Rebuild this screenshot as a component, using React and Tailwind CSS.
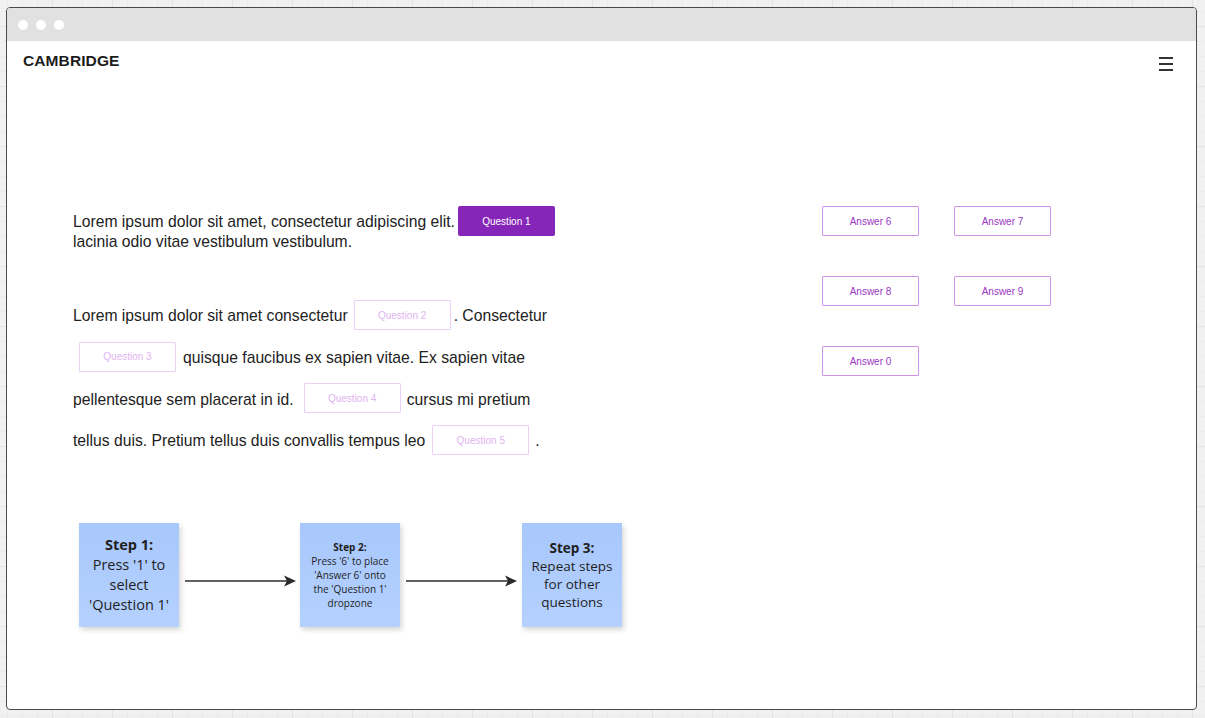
import { Fragment } from 'react'

// -- Small building blocks ---------------------------------------------

function DropZone({ label, filled = false, className = '' }) {
  if (filled) {
    return (
      <span className={`inline-flex items-center justify-center w-[97px] h-[30px] rounded-[2px] bg-[#8626b8] text-white text-[10px] shrink-0 ${className}`}>
        {label}
      </span>
    )
  }
  return (
    <span className={`inline-flex items-center justify-center w-[97px] h-[30px] rounded-[1px] bg-white border border-[#ebd0f6] text-[#dfb3f0] text-[10px] shrink-0 ${className}`}>
      {label}
    </span>
  )
}

function AnswerChip({ label }) {
  return (
    <div className="flex items-center justify-center w-[97px] h-[30px] rounded-[1px] border border-[#cf94e6] bg-white text-[#9a36c4] text-[10px]">
      {label}
    </div>
  )
}

function StepNote({ children, className = '' }) {
  return (
    <div
      className={`w-[100px] h-[104px] flex flex-col items-center justify-center text-center text-[#1f1f1f] bg-[linear-gradient(to_bottom,#a8c7fb,#b4d1ff)] shadow-[2px_3px_5px_rgba(0,0,0,0.16)] font-['Open_Sans',sans-serif] shrink-0 ${className}`}
    >
      {children}
    </div>
  )
}

function Arrow() {
  return (
    <svg width="121" height="16" viewBox="0 0 121 16" className="shrink-0 mt-[11px]">
      <line x1="6" y1="8" x2="108" y2="8" stroke="#2b2b2b" strokeWidth="1.6" />
      <path d="M105 2.5 L117 8 L105 13.5 L108 8 Z" fill="#2b2b2b" />
    </svg>
  )
}

// -- Page ----------------------------------------------------------------

const answers = ['Answer 6', 'Answer 7', 'Answer 8', 'Answer 9', 'Answer 0']

export default function App() {
  return (
    <div className="w-[1205px] h-[718px] overflow-hidden bg-[#f1f1f1] bg-[linear-gradient(to_right,#e3e3e3_1px,transparent_1px),linear-gradient(to_bottom,#e3e3e3_1px,transparent_1px),linear-gradient(to_right,#ebebeb_1px,transparent_1px),linear-gradient(to_bottom,#ebebeb_1px,transparent_1px)] [background-size:60px_60px,60px_60px,15px_15px,15px_15px] [background-position:52px_26px,52px_26px,52px_26px,52px_26px] pt-[7px] pl-[6px] font-['Liberation_Sans',Arial,sans-serif]">
      <div className="w-[1191px] h-[703px] rounded-[4px] border border-[#4a4a4a] bg-white overflow-hidden flex flex-col">
        {/* window chrome */}
        <div className="h-[33px] bg-[#e1e1e1] flex items-center gap-[8px] pl-[11px] shrink-0">
          <span className="w-[10px] h-[10px] rounded-full bg-white" />
          <span className="w-[10px] h-[10px] rounded-full bg-white" />
          <span className="w-[10px] h-[10px] rounded-full bg-white" />
        </div>

        {/* header */}
        <div className="h-[40px] flex items-center justify-between pl-[16px] pr-[23px] shrink-0">
          <span className="text-[15.5px] font-bold text-[#1c1c1c] tracking-[0.1px]">CAMBRIDGE</span>
          <div className="flex flex-col gap-[4px] mt-[6px]">
            <span className="block w-[14px] h-[2px] bg-[#333]" />
            <span className="block w-[14px] h-[2px] bg-[#333]" />
            <span className="block w-[14px] h-[2px] bg-[#333]" />
          </div>
        </div>

        {/* body */}
        <div className="flex pl-[66px] pt-[125px]">
          <div className="w-[749px] shrink-0 text-[15.7px] text-[#222]">
            <div className="flex items-center h-[30px]">
              <span className="mt-[2px]">Lorem ipsum dolor sit amet, consectetur adipiscing elit.</span>
              <DropZone label="Question 1" filled className="ml-[3px]" />
            </div>
            <div className="leading-[19px] -mt-[4px]">lacinia odio vitae vestibulum vestibulum.</div>

            <div className="mt-[49px] flex flex-col gap-[11.7px]">
              <div className="flex items-center h-[30px]">
                <span className="mt-[2px]">Lorem ipsum dolor sit amet consectetur</span>
                <DropZone label="Question 2" className="ml-[6px]" />
                <span className="ml-[3px] mt-[2px]">. Consectetur</span>
              </div>
              <div className="flex items-center h-[30px]">
                <DropZone label="Question 3" className="ml-[6px]" />
                <span className="ml-[7px] mt-[2px]">quisque faucibus ex sapien vitae. Ex sapien vitae</span>
              </div>
              <div className="flex items-center h-[30px]">
                <span className="mt-[2px]">pellentesque sem placerat in id.</span>
                <DropZone label="Question 4" className="ml-[10px]" />
                <span className="ml-[6px] mt-[2px]">cursus mi pretium</span>
              </div>
              <div className="flex items-center h-[30px]">
                <span className="mt-[2px]">tellus duis. Pretium tellus duis convallis tempus leo</span>
                <DropZone label="Question 5" className="ml-[7px]" />
                <span className="ml-[6px] mt-[2px]">.</span>
              </div>
            </div>

            <div className="mt-[68px] ml-[6px] flex items-center">
              <StepNote>
                <div className="text-[14.5px] leading-[20px] font-bold">Step 1:</div>
                <div className="text-[14.5px] leading-[20px]">Press '1' to<br />select<br />'Question 1'</div>
              </StepNote>
              <Arrow />
              <StepNote>
                <div className="text-[10px] leading-[14px] font-bold">Step 2:</div>
                <div className="text-[10px] leading-[14px]">Press '6' to place<br />'Answer 6' onto<br />the 'Question 1'<br />dropzone</div>
              </StepNote>
              <Arrow />
              <StepNote className="ml-[1px]">
                <div className="text-[13.5px] leading-[18px] font-bold">Step 3:</div>
                <div className="text-[13.5px] leading-[18px]">Repeat steps<br />for other<br />questions</div>
              </StepNote>
            </div>
          </div>

          {/* answer bank */}
          <div className="grid grid-cols-[97px_97px] gap-x-[35px] gap-y-[40px] content-start">
            {answers.map(a => (
              <Fragment key={a}>
                <AnswerChip label={a} />
              </Fragment>
            ))}
          </div>
        </div>
      </div>
    </div>
  )
}
